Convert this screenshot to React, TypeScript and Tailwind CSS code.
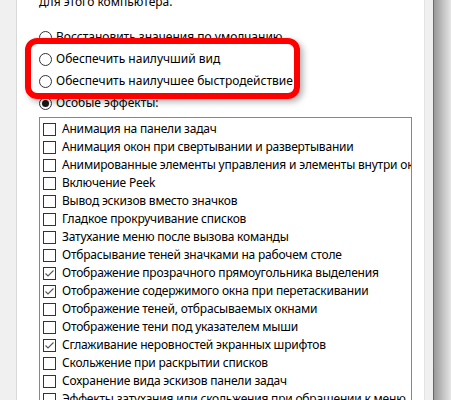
const FONT = { fontFamily: '"Noto Sans", "Open Sans", sans-serif' }

const effects: [string, boolean][] = [
  ['Анимация на панели задач', false],
  ['Анимация окон при свертывании и развертывании', false],
  ['Анимированные элементы управления и элементы внутри окна', false],
  ['Включение Peek', false],
  ['Вывод эскизов вместо значков', false],
  ['Гладкое прокручивание списков', false],
  ['Затухание меню после вызова команды', false],
  ['Отбрасывание теней значками на рабочем столе', false],
  ['Отображение прозрачного прямоугольника выделения', true],
  ['Отображение содержимого окна при перетаскивании', true],
  ['Отображение теней, отбрасываемых окнами', false],
  ['Отображение тени под указателем мыши', false],
  ['Сглаживание неровностей экранных шрифтов', true],
  ['Скольжение при раскрытии списков', false],
  ['Сохранение вида эскизов панели задач', false],
  ['Эффекты затухания или скольжения при обращении к меню', false],
]

const radios = [
  { label: 'Восстановить значения по умолчанию', on: false },
  { label: 'Обеспечить наилучший вид', on: false },
  { label: 'Обеспечить наилучшее быстродействие', on: false },
  { label: 'Особые эффекты:', on: true },
]

function Radio({ on }: { on: boolean }) {
  return (
    <span className="w-[13px] h-[13px] shrink-0 rounded-full border border-[#333] bg-white flex items-center justify-center">
      {on && <span className="w-[7px] h-[7px] rounded-full bg-[#1a1a1a]" />}
    </span>
  )
}

function Check({ on }: { on: boolean }) {
  return (
    <span className="w-[13px] h-[13px] shrink-0 border border-[#333] bg-white flex items-center justify-center">
      {on && (
        <svg width="11" height="11" viewBox="0 0 11 11">
          <polyline points="1.5,5.5 4,8 9.5,2.5" fill="none" stroke="#555" strokeWidth="1.1" />
        </svg>
      )}
    </span>
  )
}

export default function App() {
  return (
    <div className="w-[451px] h-[400px] overflow-hidden flex bg-[#f0f0f0] text-[12px] text-black" style={FONT}>
      {/* dialog background on the left */}
      <div className="w-[16px] shrink-0" />

      {/* tab page */}
      <div className="relative w-[409px] shrink-0 bg-white border-l border-[#d9d9d9] border-r border-r-[#e3e3e3] pl-[22px]">
        <div className="h-[16px] leading-[16px] -mt-[6px] whitespace-nowrap">для этого компьютера.</div>

        <div className="mt-[16px] flex flex-col">
          {radios.map(r => (
            <div key={r.label} className="h-[22px] flex items-center gap-[4px] whitespace-nowrap">
              <Radio on={r.on} />
              <span>{r.label}</span>
            </div>
          ))}
        </div>

        {/* effects list */}
        <div className="mt-[3px] w-[373px] h-[300px] border border-[#828790] pt-[2px] pl-[3px] overflow-hidden tracking-[-0.2px]">
          {effects.map(([label, on]) => (
            <div key={label} className="h-[18px] flex items-center gap-[6px] whitespace-nowrap overflow-hidden">
              <Check on={on} />
              <span>{label}</span>
            </div>
          ))}
        </div>

        {/* red highlight around two options */}
        <div className="absolute left-[8px] top-[38px] w-[275px] h-[61px] rounded-[12px] border-[6px] border-[#ff0000] shadow-[3px_3px_6px_rgba(0,0,0,0.3)]" />
      </div>

      <div className="w-[8px] shrink-0" />

      {/* window edge */}
      <div className="w-[1px] shrink-0 flex flex-col">
        <div className="h-[369px] bg-[#6e6e6e]" />
        <div className="flex-1 bg-[#2f73b3]" />
      </div>

      {/* drop shadow */}
      <div className="flex-1 bg-gradient-to-r from-[#9a9a9a] to-[#e6e6e6]" />
    </div>
  )
}
